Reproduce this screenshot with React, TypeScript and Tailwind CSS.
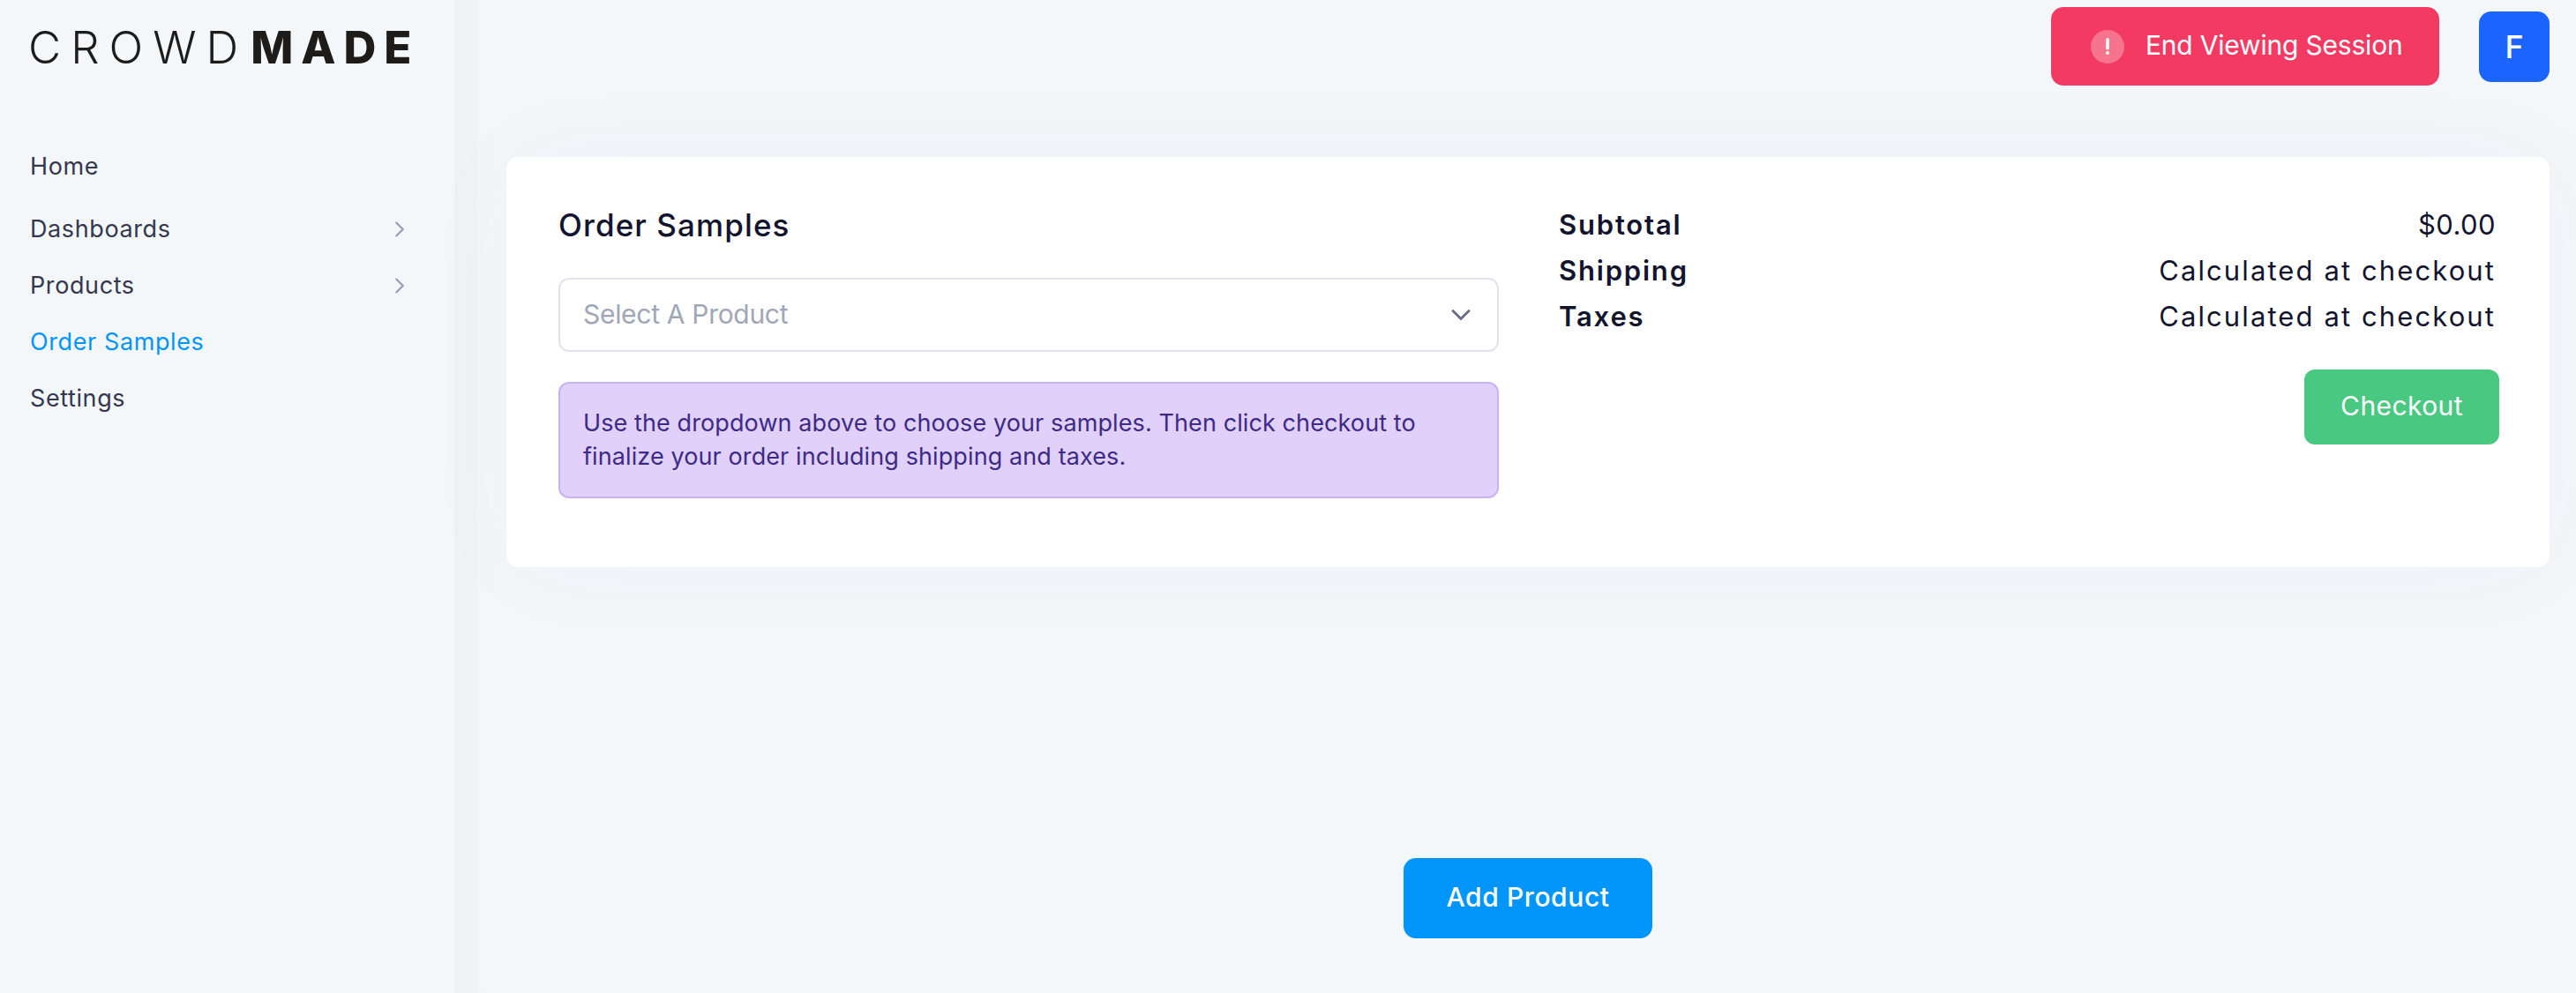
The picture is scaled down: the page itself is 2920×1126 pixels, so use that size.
import { ChevronDown, ChevronRight } from "lucide-react";

const NAV = [
  { label: "Dashboards", arrow: true },
  { label: "Products", arrow: true },
  { label: "Order Samples", active: true },
  { label: "Settings" },
];

function Logo() {
  return (
    <div className="-ml-[2px] flex h-[37px] items-center whitespace-nowrap text-[51px] leading-none text-[#1d1c1b]">
      <span className="font-light tracking-[11px]">CROWD</span>
      <span className="ml-[3px] font-extrabold tracking-[9px]">MADE</span>
    </div>
  );
}

function Sidebar() {
  return (
    <aside className="w-[515px] shrink-0 bg-[#f4f7fa] pt-[35px] pl-[34px] pr-[47px]">
      <Logo />
      <nav className="mt-[85px] text-[27px] tracking-[0.6px] text-[#33384f]">
        <a className="mb-[7px] flex h-16 items-center">Home</a>
        {NAV.map((item) => (
          <a
            key={item.label}
            className={
              item.active
                ? "flex h-16 items-center justify-between text-[#0095fb]"
                : "flex h-16 items-center justify-between"
            }
          >
            {item.label}
            {item.arrow && <ChevronRight size={30} strokeWidth={1.7} className="text-[#9a9db5]" />}
          </a>
        ))}
      </nav>
    </aside>
  );
}

function SummaryRow({ label, value, tight }: { label: string; value: string; tight?: boolean }) {
  return (
    <div className="flex h-[52px] items-center justify-between pr-1">
      <span className="font-semibold tracking-[1.8px]">{label}</span>
      <span className={tight ? "tracking-[0.4px]" : "tracking-[2.1px]"}>{value}</span>
    </div>
  );
}

export default function App() {
  return (
    <div className="flex h-screen overflow-hidden font-[Inter,sans-serif]">
      <Sidebar />
      <main className="flex-1 bg-[linear-gradient(90deg,#eff2f5,#f0f3f6_26px,#f3f6f9_27px,#f4f7fa_60px)] pl-[59px] pr-[30px] pt-2">
        <header className="flex h-[89px] items-center justify-end gap-[45px]">
          <button
            type="button"
            className="flex h-[89px] w-[440px] items-center gap-[24px] rounded-[14px] bg-[#f23a63] pb-[3px] pl-[45px] text-[30px] tracking-[-0.2px] text-white"
          >
            <svg width="38" height="38" viewBox="0 0 38 38" className="mt-[3px]">
              <circle cx="19" cy="19" r="19" fill="#f7748f" />
              <rect x="17.2" y="9" width="3.6" height="13.5" rx="1.8" fill="#fff" />
              <circle cx="19" cy="26" r="2" fill="#fff" />
            </svg>
            End Viewing Session
          </button>
          <div className="flex h-20 w-20 items-center justify-center rounded-[14px] bg-[#1b64ff] text-[36px] font-medium text-white">
            F
          </div>
        </header>

        <section className="mt-[81px] grid grid-cols-2 gap-[68px] rounded-[14px] bg-white pl-[59px] pr-[57px] pt-[51px] pb-[78px] text-[#13142e] shadow-[0_0_120px_rgba(40,60,90,0.03)]">
          <div>
            <h2 className="flex h-[52px] items-center text-[35px] font-medium tracking-[1.1px]">
              Order Samples
            </h2>
            <div className="mt-[34px] flex h-[84px] items-center justify-between rounded-[12px] border-2 border-[#e1e3f1] pb-[2px] pl-[26px] pr-[23px] text-[30px] tracking-[-0.3px] text-[#a1a6b7]">
              Select A Product
              <ChevronDown size={36} strokeWidth={2} className="mt-[2px] text-[#6b6f85]" />
            </div>
            <p className="mt-[34px] rounded-[12px] border-2 border-[#c9b3f6] bg-[#e0d0fa] px-[26px] py-[26px] text-[27px] leading-[38px] tracking-[0.1px] text-[#3d2a86]">
              Use the dropdown above to choose your samples. Then click checkout to finalize your
              order including shipping and taxes.
            </p>
          </div>
          <div className="text-[31px]">
            <SummaryRow label="Subtotal" value="$0.00" tight />
            <SummaryRow label="Shipping" value="Calculated at checkout" />
            <SummaryRow label="Taxes" value="Calculated at checkout" />
            <div className="mt-[34px] flex justify-end">
              <button
                type="button"
                className="h-[85px] w-[221px] rounded-[12px] bg-[#48c880] pb-[2px] text-[30px] tracking-[0.4px] text-white"
              >
                Checkout
              </button>
            </div>
          </div>
        </section>

        <div className="mt-[330px] flex justify-center">
          <button
            type="button"
            className="h-[91px] w-[282px] rounded-[14px] bg-[#0095fb] pb-[2px] text-[30px] font-medium tracking-[0.6px] text-white"
          >
            Add Product
          </button>
        </div>
      </main>
    </div>
  );
}
